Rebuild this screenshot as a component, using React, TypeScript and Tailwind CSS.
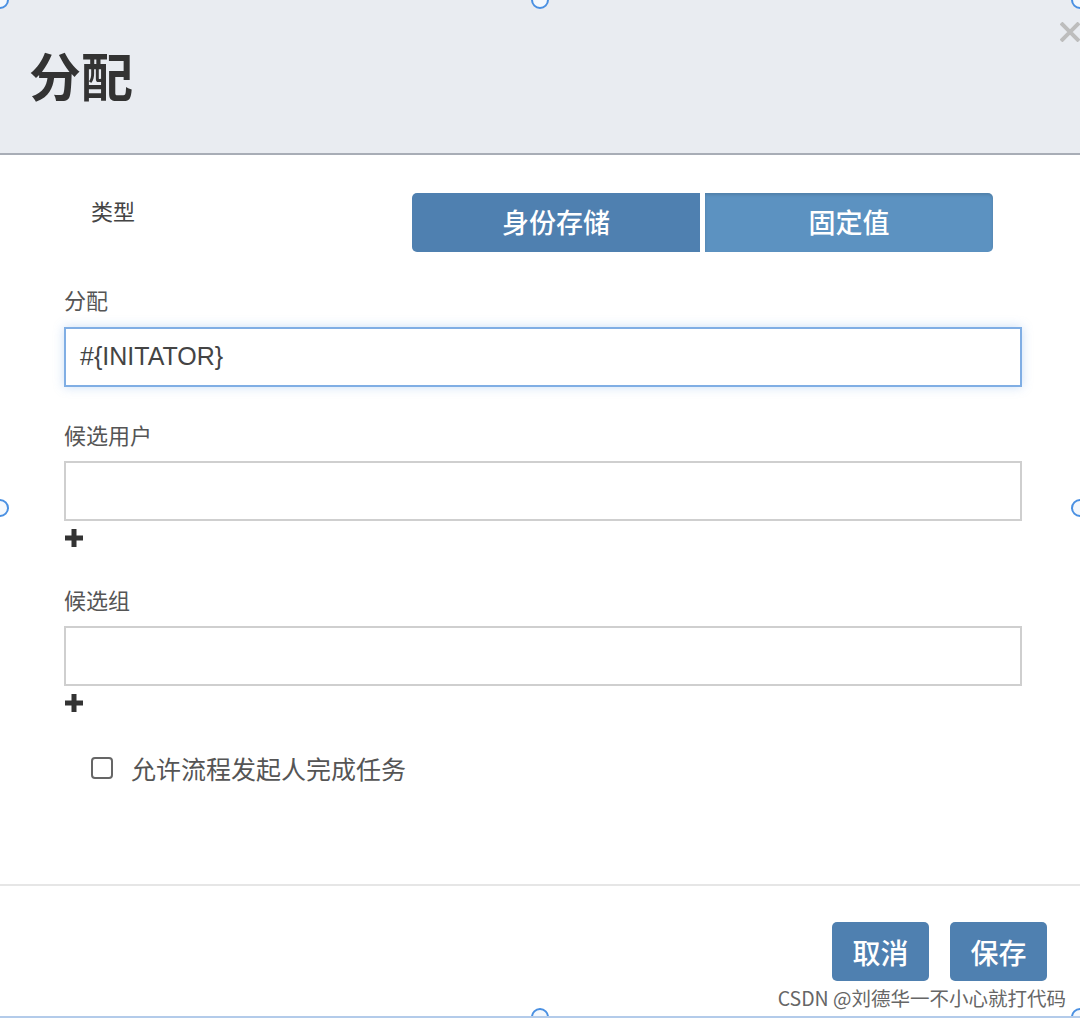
import React from "react";

const font = { fontFamily: '"Noto Sans CJK SC", "Noto Sans", sans-serif' };

function Handle({ className }: { className: string }) {
  return (
    <div
      className={`absolute w-[18px] h-[18px] rounded-full border-2 border-[#4a90e2] bg-[#f4f8fd] ${className}`}
    ></div>
  );
}

function Plus() {
  return (
    <svg width="18" height="18" viewBox="0 0 18 18" className="mt-[8px] ml-[1px]">
      <rect x="6.5" y="0" width="5" height="18" fill="#333" />
      <rect x="0" y="6.5" width="18" height="5" fill="#333" />
    </svg>
  );
}

function Label({ text, className = "" }: { text: string; className?: string }) {
  return (
    <div className={`text-[22px] leading-[30px] text-[#555] ${className}`}>{text}</div>
  );
}

export default function App() {
  return (
    <div
      className="relative w-[1080px] h-[1018px] overflow-hidden bg-white flex flex-col border-b-2 border-[#b3cbea]"
      style={font}
    >
      {/* Header */}
      <div className="h-[155px] shrink-0 bg-[#e9ecf1] border-b-2 border-[#a8adb6] flex items-center pl-[29px]">
        <h1 className="text-[52px] font-bold text-[#333] leading-none mt-[-3px]">分配</h1>
      </div>

      {/* Body */}
      <div className="pl-[64px] pr-[58px]">
        {/* Type row */}
        <div className="flex items-start mt-[38px]">
          <div className="w-[348px] pl-[27px] pt-[2px] text-[22px] leading-[30px] text-[#444]">类型</div>
          <div className="flex gap-[5px]">
            <button className="w-[288px] h-[59px] rounded-l-[5px] bg-[#4f80b0] text-white text-[27px] font-medium">
              身份存储
            </button>
            <button className="w-[288px] h-[59px] rounded-r-[5px] bg-[#5c92c1] text-white text-[27px] font-medium shadow-[inset_0_2px_3px_rgba(0,0,0,0.12)]">
              固定值
            </button>
          </div>
        </div>

        {/* Assignee */}
        <Label text="分配" className="mt-[32px]" />
        <div
          className="mt-[13px] h-[60px] border-2 border-[#80aee4] shadow-[0_0_10px_rgba(102,160,230,0.35)] flex items-center pl-[14px] text-[25px] text-[#444]"
          style={{ fontFamily: '"Liberation Sans", Arial, sans-serif' }}
        >
          #{"{"}INITATOR{"}"}
        </div>

        {/* Candidate users */}
        <Label text="候选用户" className="mt-[32px]" />
        <div className="mt-[12px] h-[60px] border-2 border-[#cfcfcf]"></div>
        <Plus />

        {/* Candidate groups */}
        <Label text="候选组" className="mt-[37px]" />
        <div className="mt-[12px] h-[60px] border-2 border-[#cfcfcf]"></div>
        <Plus />

        {/* Checkbox */}
        <div className="flex items-center mt-[41px] pl-[27px]">
          <div className="w-[22px] h-[22px] rounded-[4px] border-2 border-[#666] bg-white"></div>
          <span className="ml-[18px] text-[25px] leading-[30px] text-[#555]">允许流程发起人完成任务</span>
        </div>
      </div>

      {/* Footer */}
      <div className="mt-auto h-[132px] border-t-2 border-[#e6e6e6] flex justify-end items-start gap-[21px] pt-[36px] pr-[33px]">
        <button className="w-[97px] h-[59px] rounded-[5px] bg-[#4f80b0] text-white text-[28px] font-medium">
          取消
        </button>
        <button className="w-[97px] h-[59px] rounded-[5px] bg-[#4f80b0] text-white text-[28px] font-medium">
          保存
        </button>
      </div>

      {/* Close */}
      <svg className="absolute top-[22px] left-[1060px]" width="22" height="20" viewBox="0 0 22 20">
        <path d="M1 1 L19 19 M19 1 L1 19" stroke="#bdbdbd" strokeWidth="4" />
      </svg>

      {/* Watermark */}
      <div className="absolute bottom-[5px] right-[14px] text-[19.5px] leading-[26px] text-[#666] [text-shadow:0_0_2px_#fff]">
        CSDN @刘德华一不小心就打代码
      </div>

      {/* Selection handles */}
      <Handle className="left-[531px] top-[-9px]" />
      <Handle className="left-[-9px] top-[499px]" />
      <Handle className="right-[-9px] top-[499px]" />
      <Handle className="left-[531px] bottom-[-10px]" />
      <Handle className="right-[-9px] bottom-[-10px]" />
      <Handle className="right-[-9px] top-[-9px]" />
      <Handle className="left-[-9px] top-[-9px]" />
    </div>
  );
}
